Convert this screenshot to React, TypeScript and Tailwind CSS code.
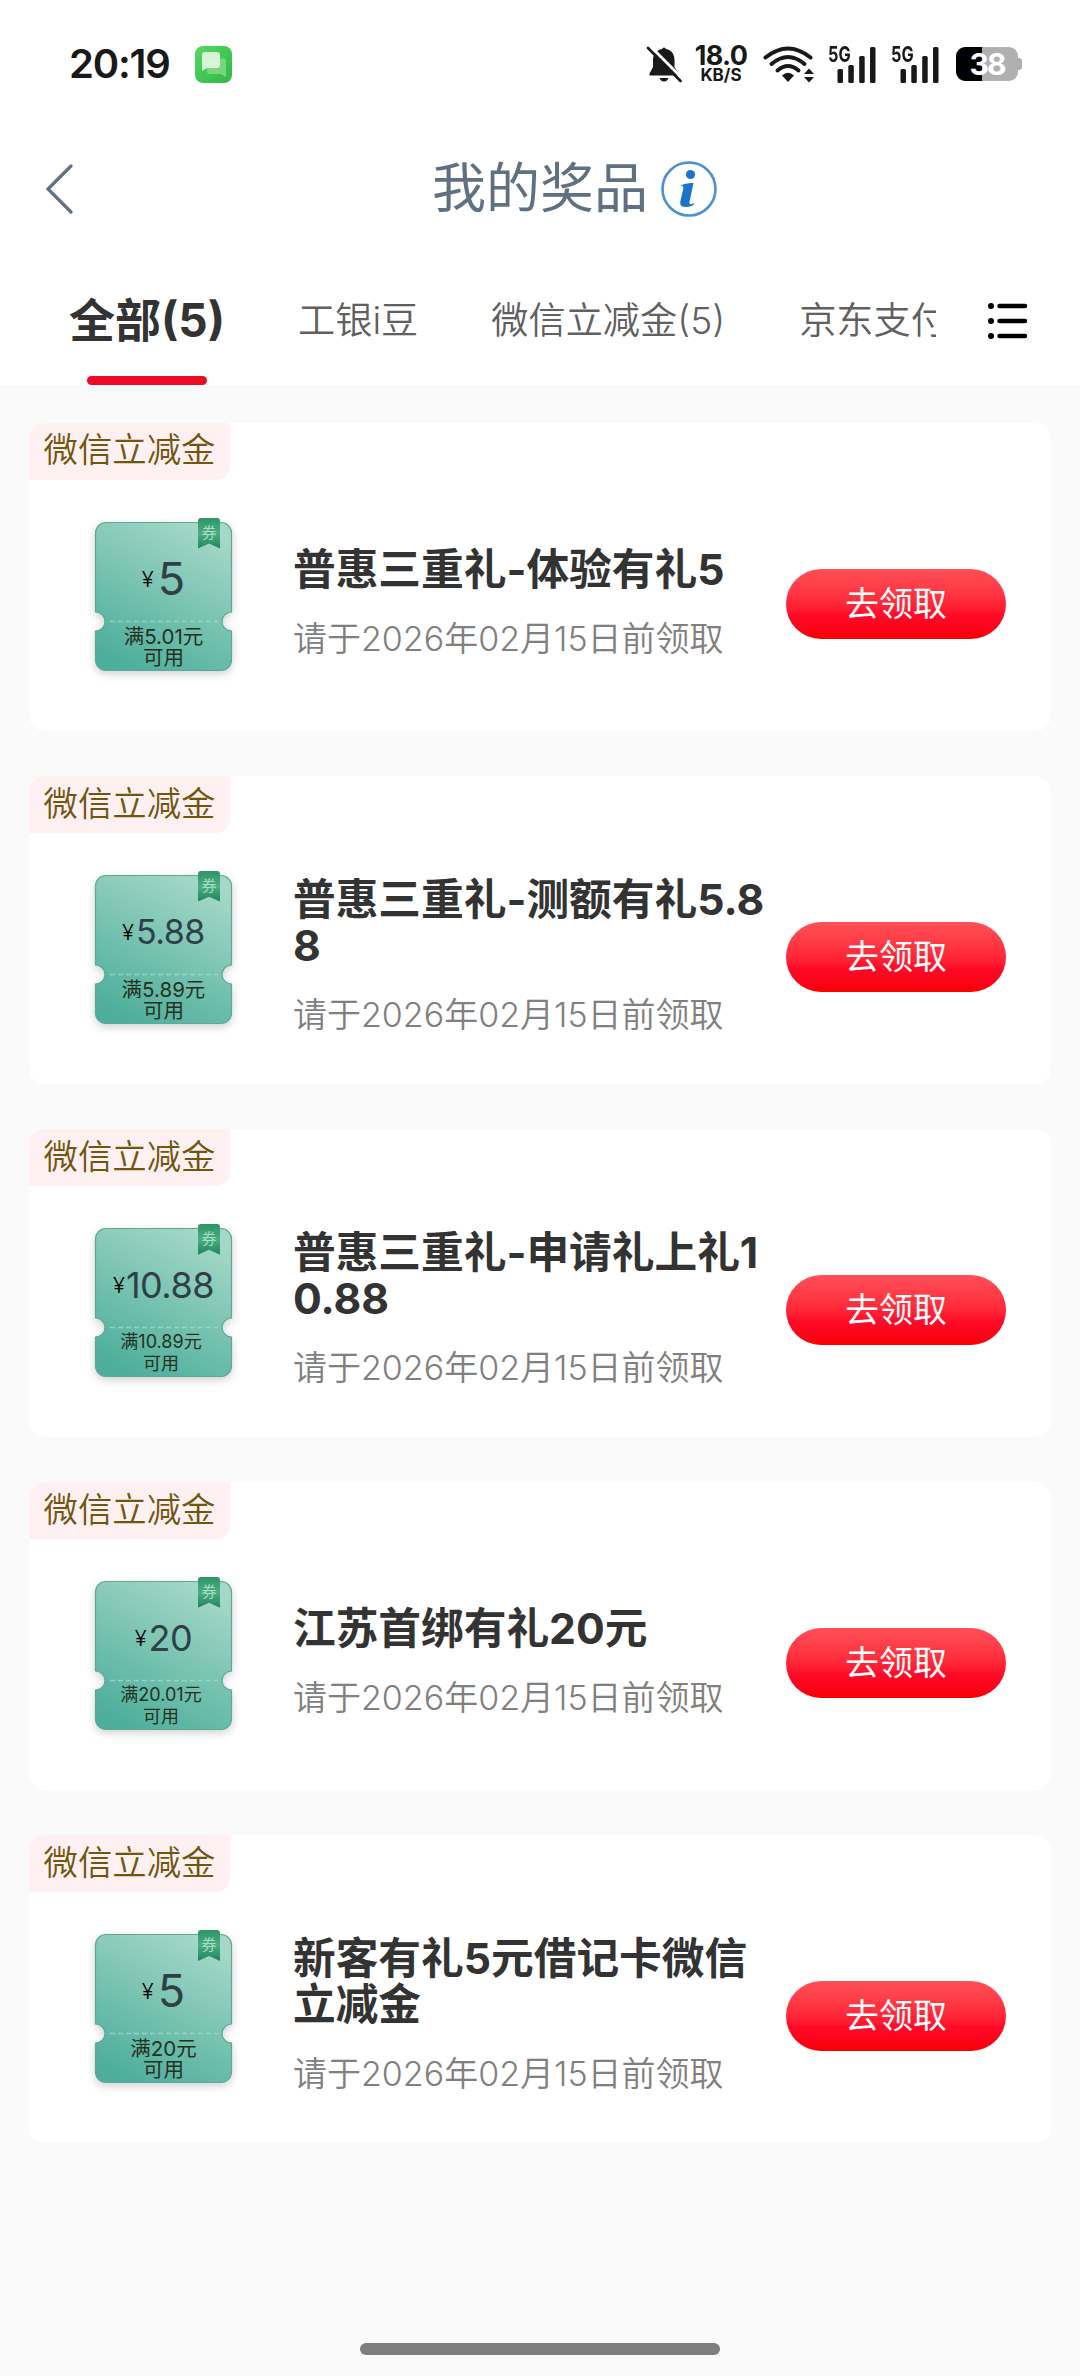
type Prize = {
  tag: string;
  amount: string;
  amountClass: string;
  limit: string;
  limitClass: string;
  title: string;
  deadline: string;
};

const prizes: Prize[] = [
  {
    tag: "微信立减金",
    amount: "5",
    amountClass: "text-[45px] ml-[4px]",
    limit: "满5.01元",
    limitClass: "text-[20.5px] leading-[21px] pt-[5px]",
    title: "普惠三重礼-体验有礼5",
    deadline: "请于2026年02月15日前领取",
  },
  {
    tag: "微信立减金",
    amount: "5.88",
    amountClass: "text-[34px] ml-[2px] tracking-[-0.500px]",
    limit: "满5.89元",
    limitClass: "text-[20.5px] leading-[21px] pt-[5px]",
    title: "普惠三重礼-测额有礼5.88",
    deadline: "请于2026年02月15日前领取",
  },
  {
    tag: "微信立减金",
    amount: "10.88",
    amountClass: "text-[36px] ml-[1px] tracking-[-0.500px]",
    limit: "满10.89元",
    limitClass: "text-[18px] leading-[22px] pt-[4px] pr-[5px]",
    title: "普惠三重礼-申请礼上礼10.88",
    deadline: "请于2026年02月15日前领取",
  },
  {
    tag: "微信立减金",
    amount: "20",
    amountClass: "text-[36px] ml-[2px] tracking-[-0.500px]",
    limit: "满20.01元",
    limitClass: "text-[18px] leading-[22px] pt-[4px] pr-[5px]",
    title: "江苏首绑有礼20元",
    deadline: "请于2026年02月15日前领取",
  },
  {
    tag: "微信立减金",
    amount: "5",
    amountClass: "text-[45px] ml-[4px]",
    limit: "满20元",
    limitClass: "text-[20.5px] leading-[21px] pt-[5px]",
    title: "新客有礼5元借记卡微信立减金",
    deadline: "请于2026年02月15日前领取",
  },
];

const MessageIcon = () => (
  <svg className="ml-[25px] h-[37px] w-[37px]" viewBox="0 0 37 37">
    <defs>
      <linearGradient id="msg" x1="0" y1="0" x2="1" y2="1">
        <stop offset="0" stopColor="#55d860" />
        <stop offset="1" stopColor="#2fb84a" />
      </linearGradient>
    </defs>
    <rect width="37" height="37" rx="8" fill="url(#msg)" />
    <path d="M15 12.500h13q3 0 3 3V31l-5-3H15q-3 0-3-3v-9.500q0-3 3-3z" fill="#8fdc8c" fillOpacity=".75" />
    <path d="M7 9q0-3 3-3h12q3 0 3 3v10q0 3-3 3H12l-5 3z" fill="#e3f8e3" fillOpacity=".9" />
  </svg>
);

const BellOffIcon = () => (
  <svg className="h-[37px] w-[36px]" viewBox="0 0 36 37">
    <path
      d="M18 1.500q1.500 0 1.800 1.600C26 4 28.500 9 28.500 14v7l4 6.500v2H3.500v-2L7 21v-7C7 9 10 4 16.200 3.100Q16.500 1.500 18 1.500z"
      fill="#191919"
    />
    <path d="M13.500 32h9q-1.500 3.500-4.500 3.500T13.500 32z" fill="#191919" />
    <path d="M4 0l33 33" stroke="#fff" strokeWidth="3" />
    <path d="M2 2l32.500 33" stroke="#191919" strokeWidth="2.600" strokeLinecap="round" />
  </svg>
);

const WifiIcon = () => (
  <svg className="ml-[15px] h-[37px] w-[51px]" viewBox="0 0 51 37">
    <g fill="none" stroke="#191919" strokeWidth="4" strokeLinecap="round">
      <path d="M2.500 11.500Q25 -6.500 47.500 11.500" />
      <path d="M8.500 18Q25 4 41.500 18" />
      <path d="M14.500 24.500Q25 15.500 35.500 24.500" />
    </g>
    <path d="M19 29.500q6-5.500 12 0L25 36z" fill="#191919" />
    <path d="M41 28l5-5.500 5 5.500zM41 31l5 5.500 5-5.500z" fill="#191919" />
  </svg>
);

const SignalIcon = () => (
  <div className="relative h-[37px] w-[48px]">
    <svg className="h-[37px] w-[48px]" viewBox="0 0 48 37" fill="#191919">
      <rect x="9.500" y="23" width="5.500" height="14" rx="1.500" />
      <rect x="20.300" y="19" width="5.500" height="18" rx="1.500" />
      <rect x="31.200" y="10" width="5.500" height="27" rx="1.500" />
      <rect x="42" y="1" width="5.500" height="36" rx="1.500" />
    </svg>
    <span className="absolute left-0 top-0 origin-left scale-x-[.74] text-[22px] leading-[16px] font-bold">
      5G
    </span>
  </div>
);

const Battery = () => (
  <div className="ml-[17px] flex items-center">
    <div className="flex h-[34px] w-[62px] items-center justify-center rounded-[9px] bg-[linear-gradient(90deg,#000_42%,#b0b0b0_42%)]">
      <span className="text-[30px] leading-none font-bold tracking-[-2px] text-white">38</span>
    </div>
    <div className="h-[12px] w-[4px] rounded-r-[3px] bg-[#b0b0b0]" />
  </div>
);

const StatusBar = () => (
  <div className="flex h-[128px] items-center pr-[58px] pl-[69px] text-[#191919]">
    <span className="text-[40px] leading-none font-semibold tracking-[-1.200px]">20:19</span>
    <MessageIcon />
    <div className="ml-auto flex items-center">
      <BellOffIcon />
      <div className="ml-[12px] flex w-[54px] flex-col items-center font-bold">
        <span className="text-[27px] leading-[22px] tracking-[-0.700px]">18.0</span>
        <span className="text-[17px] leading-[17px]">KB/S</span>
      </div>
      <WifiIcon />
      <div className="ml-[14px] flex gap-[15px]">
        <SignalIcon />
        <SignalIcon />
      </div>
      <Battery />
    </div>
  </div>
);

const Header = () => (
  <header className="flex h-[122px] items-center pl-[45px] text-[#5f7180]">
    <svg className="h-[50px] w-[28px]" viewBox="0 0 28 50" fill="none">
      <path d="M26 2L3 25l23 23" stroke="#5f7180" strokeWidth="3.200" strokeLinecap="round" />
    </svg>
    <h1 className="ml-[359px] text-[54px] leading-none font-normal">我的奖品</h1>
    <svg className="ml-[12px] h-[58px] w-[58px]" viewBox="0 0 58 58">
      <circle cx="29" cy="29" r="26.500" fill="none" stroke="#4a90d2" strokeWidth="2.600" />
      <circle cx="30.500" cy="14.500" r="4.600" fill="#1b74cc" />
      <path
        d="M20 25.500q6-3 13.500-2.500l-4 19q-.5 2.500 1.500 2.300t3.500-1.300q-.5 3.500-8 4-7.500 0-6.200-5.500l3-13q.7-3-3.300-3z"
        fill="#1b74cc"
      />
    </svg>
  </header>
);

const Tabs = () => (
  <nav className="flex h-[135px] pl-[70px]">
    <div className="flex w-[866px] overflow-hidden text-[37.200px] font-[350] whitespace-nowrap text-[#606060]">
      <div className="flex w-[154px] shrink-0 flex-col items-center">
        <span className="h-[126px] text-[46px] leading-[141px] font-bold text-[#333]">全部(5)</span>
        <span className="h-[9px] w-[120px] rounded-full bg-[#ec0a25]" />
      </div>
      <span className="ml-[74px] shrink-0 leading-[141px]">工银i豆</span>
      <span className="ml-[73px] shrink-0 leading-[141px]">微信立减金(5)</span>
      <span className="ml-[74px] shrink-0 leading-[141px]">京东支付</span>
    </div>
    <svg className="mt-[52px] ml-[51px] h-[38px] w-[42px]" viewBox="0 0 42 38" strokeLinecap="round">
      <path d="M4 4h0M4 19h0M4 34h0" stroke="#000" strokeWidth="6" />
      <path d="M12.500 4h25.500M12.500 19h25.500M12.500 34h25.500" stroke="#000" strokeWidth="4.500" />
    </svg>
  </nav>
);

const COUPON_OUTLINE =
  "M11 .5H126A10.500 10.500 0 0 1 136.500 11V90A9.500 9.500 0 0 0 136.500 109V138A10.500 10.500 0 0 1 126 148.500H11A10.500 10.500 0 0 1 .5 138V109A9.500 9.500 0 0 0 .5 90V11A10.500 10.500 0 0 1 11 .5Z";

const Coupon = ({ prize }: { prize: Prize }) => (
  <div className="relative mt-[99px] h-[149px] w-[137px]">
    <svg
      className="absolute inset-0 h-[149px] w-[137px] overflow-visible drop-shadow-[0_3px_4px_rgba(0,0,0,0.18)]"
      viewBox="0 0 137 149"
    >
      <defs>
        <linearGradient id="ticket" x1="0.75" y1="0" x2="0.25" y2="1">
          <stop offset="0" stopColor="#a6d8c8" />
          <stop offset="1" stopColor="#4cae9b" />
        </linearGradient>
      </defs>
      <path d={COUPON_OUTLINE} fill="url(#ticket)" stroke="#5fa897" strokeWidth="1.200" />
      <path d="M15 99.500h108" stroke="#a9dccf" strokeOpacity=".7" strokeWidth="1.500" strokeDasharray="5 3" />
    </svg>
    <div className="absolute -top-[4px] left-[103px] flex h-[31px] w-[22px] justify-center rounded-t-[3px] bg-linear-to-b from-[#2c9566] via-[#4aad84] to-[#1c8557] pt-[7px] text-[15px] leading-[16px] text-[#a9dcc5] [clip-path:polygon(0_0,100%_0,100%_100%,50%_84%,0_100%)]">
      券
    </div>
    <div className="relative flex h-[99px] items-center justify-center pt-[15px] leading-none text-[#2f4048]">
      <span className="text-[22px] font-[350] text-black">¥</span>
      <span className={prize.amountClass}>{prize.amount}</span>
    </div>
    <div className={`relative text-center text-[#26301f] ${prize.limitClass}`}>
      {prize.limit}
      <br />
      可用
    </div>
  </div>
);

const PrizeCard = ({ prize }: { prize: Prize }) => (
  <article className="relative flex h-[308.500px] overflow-hidden rounded-[16px] bg-white pl-[66px]">
    <span className="absolute top-0 left-0 flex h-[57.500px] w-[201px] items-center justify-center rounded-br-[14px] bg-[#fff1f1] pb-[2px] text-[34.400px] font-[350] text-[#72550f]">
      {prize.tag}
    </span>
    <Coupon prize={prize} />
    <div className="ml-[61px] flex w-[480px] flex-col justify-center pt-[55px]">
      <h2 className="text-[42.700px] leading-[46px] font-bold break-all text-[#333]">{prize.title}</h2>
      <p className="mt-[23px] text-[34px] leading-[46px] font-[350] whitespace-nowrap text-[#808080]">
        {prize.deadline}
      </p>
    </div>
    <button className="mt-[146px] ml-[13px] h-[70px] w-[220px] rounded-full bg-linear-to-b from-[#ff4f58] via-[#ff0a2a] via-65% to-[#f80000] text-[34px] leading-[68px] text-white">
      去领取
    </button>
  </article>
);

export default function App() {
  return (
    <div className="flex h-[2376px] w-[1080px] flex-col overflow-hidden bg-[#fafafa] font-[Inter,'Noto_Sans_CJK_SC',sans-serif]">
      <div className="bg-white">
        <StatusBar />
        <Header />
        <Tabs />
      </div>
      <main className="mt-[37.500px] flex flex-col gap-[44.600px] px-[29px]">
        {prizes.map((prize, i) => (
          <PrizeCard key={i} prize={prize} />
        ))}
      </main>
      <div className="mx-auto mt-auto mb-[21px] h-[12px] w-[360px] shrink-0 rounded-full bg-[#7e7e7e]" />
    </div>
  );
}
